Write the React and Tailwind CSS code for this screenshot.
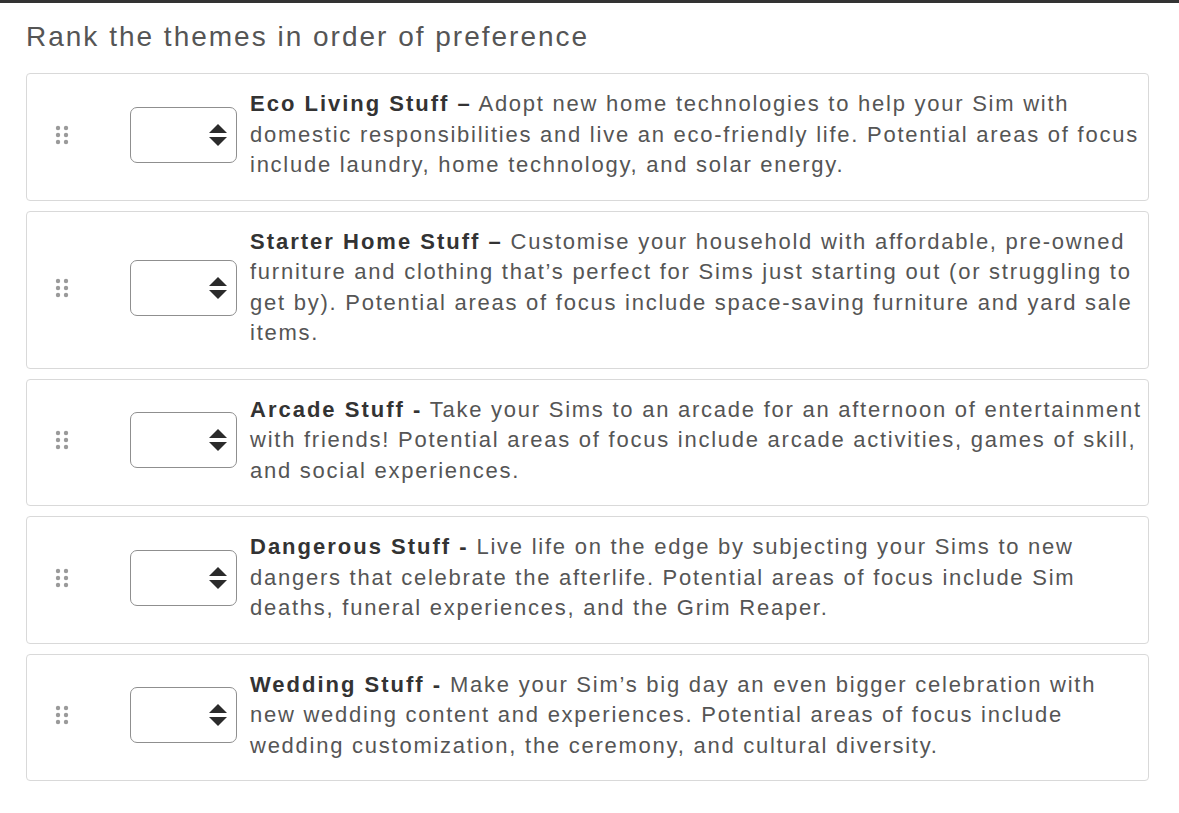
import React from 'react';

const themes = [
    {
        title: 'Eco Living Stuff –',
        body: 'Adopt new home technologies to help your Sim with domestic responsibilities and live an eco-friendly life. Potential areas of focus include laundry, home technology, and solar energy.',
    },
    {
        title: 'Starter Home Stuff –',
        body: 'Customise your household with affordable, pre-owned furniture and clothing that’s perfect for Sims just starting out (or struggling to get by). Potential areas of focus include space-saving furniture and yard sale items.',
    },
    {
        title: 'Arcade Stuff -',
        body: 'Take your Sims to an arcade for an afternoon of entertainment with friends! Potential areas of focus include arcade activities, games of skill, and social experiences.',
    },
    {
        title: 'Dangerous Stuff -',
        body: 'Live life on the edge by subjecting your Sims to new dangers that celebrate the afterlife. Potential areas of focus include Sim deaths, funeral experiences, and the Grim Reaper.',
    },
    {
        title: 'Wedding Stuff -',
        body: 'Make your Sim’s big day an even bigger celebration with new wedding content and experiences. Potential areas of focus include wedding customization, the ceremony, and cultural diversity.',
    },
];

function Handle() {
    return (
        <svg width="14" height="20" viewBox="0 0 14 20" className="shrink-0">
            {[3, 10, 17].map((y) =>
                [3, 11].map((x) => <circle key={`${x}-${y}`} cx={x} cy={y} r="2.2" fill="#9a9a9a" />)
            )}
        </svg>
    );
}

function RankSelect() {
    return (
        <div className="w-[107px] h-[56px] shrink-0 rounded-[7px] border border-[#8f8f8f] bg-white flex items-center justify-end pr-[8px]">
            <svg width="20" height="30" viewBox="0 0 20 30">
                <path d="M10 4 L19 13 L1 13 Z" fill="#2b2b2b" />
                <path d="M1 17 L19 17 L10 26 Z" fill="#2b2b2b" />
            </svg>
        </div>
    );
}

export default function App() {
    return (
        <div className="min-h-screen bg-white font-['Liberation_Sans',Arial,sans-serif]">
            <div className="h-[3px] bg-[#333]" />
            <div className="px-[26px] pt-[16px]">
                <h1 className="text-[28px] leading-[36px] tracking-[2px] text-[#555] mb-[18px]">Rank the themes in order of preference</h1>
                <div className="flex flex-col gap-[10px] w-[1123px]">
                    {themes.map((t) => (
                        <div key={t.title} className="flex items-center rounded-[4px] border border-[#d9d9d9] bg-white pt-[15px] pb-[19px] pl-[28px] pr-[1px]">
                            <Handle />
                            <div className="ml-[61px] mr-[13px]">
                                <RankSelect />
                            </div>
                            <p className="text-[22px] leading-[30.5px] tracking-[1.75px] text-[#555]">
                                <b className="text-[#333] tracking-[2px]">{t.title}</b> {t.body}
                            </p>
                        </div>
                    ))}
                </div>
            </div>
        </div>
    );
}
